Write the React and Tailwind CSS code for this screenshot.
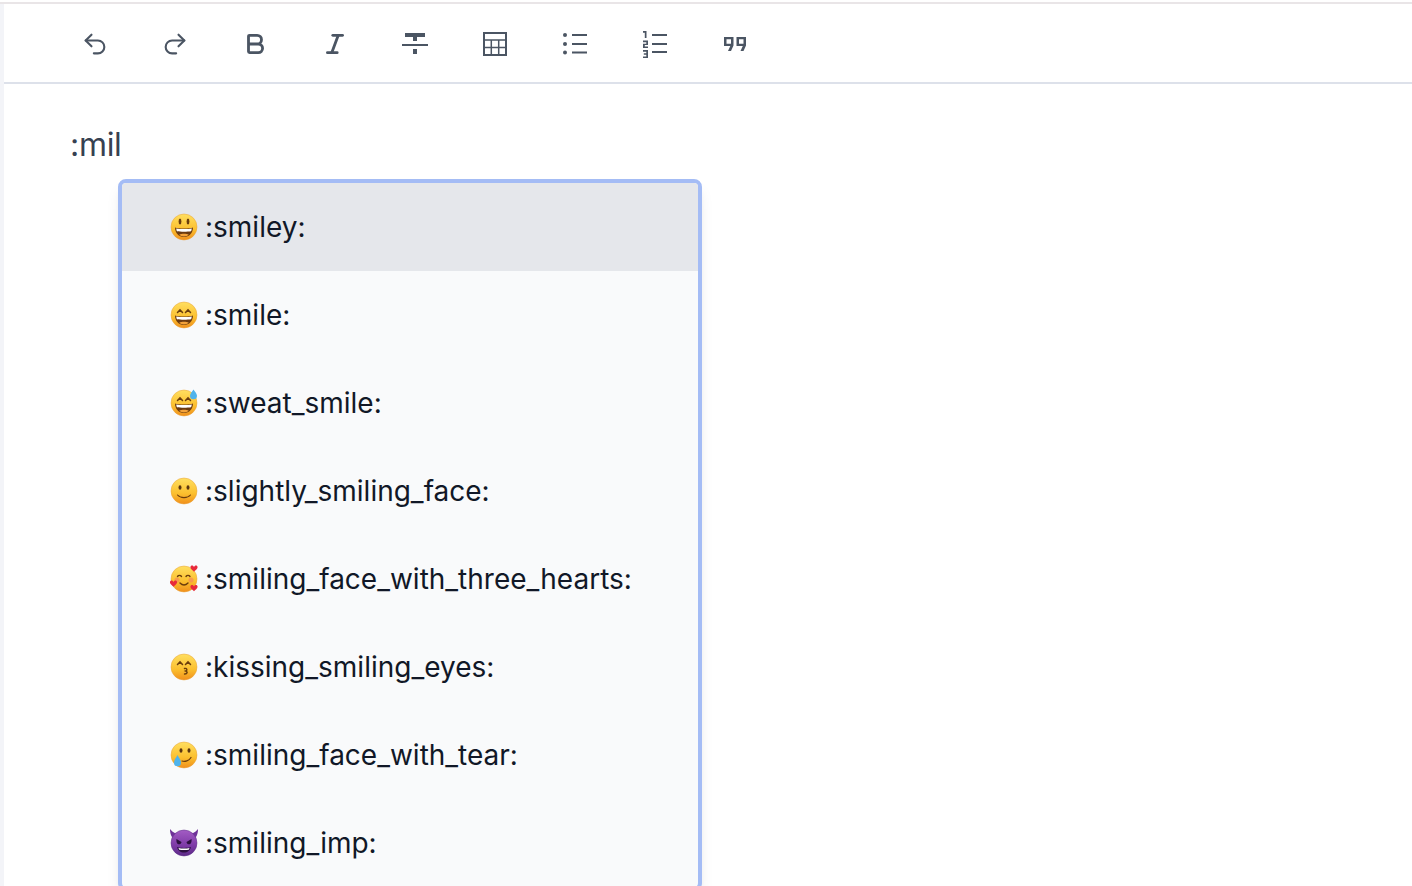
import React from "react";
import { Undo2, Redo2, Bold, Italic } from "lucide-react";

const rows = [
  { name: ":smiley:", emoji: "smiley", active: true },
  { name: ":smile:", emoji: "smile" },
  { name: ":sweat_smile:", emoji: "sweat" },
  { name: ":slightly_smiling_face:", emoji: "slight" },
  { name: ":smiling_face_with_three_hearts:", emoji: "hearts" },
  { name: ":kissing_smiling_eyes:", emoji: "kiss" },
  { name: ":smiling_face_with_tear:", emoji: "tear" },
  { name: ":smiling_imp:", emoji: "imp" },
];

const Heart = ({ x, y }) => (
  <path
    transform={`translate(${x} ${y})`}
    d="M0 1.6C-.5-.6-3.6-.5-3.6 1.8-3.6 3.500-1 5 0 6.200 1 5 3.6 3.500 3.6 1.8 3.6-.5.5-.6 0 1.6Z"
    fill="#e8293a"
  />
);

const HappyEyes = () => (
  <g fill="none" stroke="#6b3d0c" strokeWidth="1.5" strokeLinecap="round">
    <path d="M7.500 11.500l2.500-2.600 2.500 2.600" />
    <path d="M15.500 11.500l2.500-2.600 2.500 2.600" />
  </g>
);

const Grin = () => (
  <g>
    <path d="M5 14.500c3 1.300 15 1.300 18 0 0 5.500-3.800 9.500-9 9.500s-9-4-9-9.500Z" fill="#6b3a10" />
    <path d="M6.200 15.400c3.500 .8 12.100 .8 15.600 0-.2 1.500-.5 2.300-.8 2.900-3.500 .6-10.500 .6-14 0-.3-.6-.6-1.400-.8-2.900Z" fill="#fff" />
    <path d="M9.200 21.800c2.400-1.300 7.200-1.300 9.600 0-1.300 1.100-3 1.700-4.800 1.700s-3.500-.6-4.800-1.700Z" fill="#f3a23a" />
  </g>
);

function Emoji({ type }) {
  const id = `face-${type}`;
  const imp = type === "imp";
  return (
    <svg viewBox="0 0 28 28" className="w-7 h-7 shrink-0">
      <defs>
        <linearGradient id={id} x1="0" y1="0" x2="0" y2="1">
          <stop offset="0" stopColor={imp ? "#a35cc4" : "#ffdf60"} />
          <stop offset=".6" stopColor={imp ? "#7d3aa6" : "#fbbf2e"} />
          <stop offset="1" stopColor={imp ? "#5c2a86" : "#f08f1c"} />
        </linearGradient>
      </defs>
      {imp && <path d="M0 0c0 5 1.500 9 5 10.500l5-5C6.500 5 3 4 0 0ZM28 0c0 5-1.500 9-5 10.500l-5-5C21.500 5 25 4 28 0Z" fill="#6f3299" />}
      <circle cx="14" cy="14" r="13" fill={`url(#${id})`} stroke={imp ? "#5c2a86" : "#e8a33a"} strokeWidth=".5" />

      {type === "smiley" && (
        <g>
          <ellipse cx="10" cy="8.500" rx="1.400" ry="3" fill="#6b3d0c" />
          <ellipse cx="18" cy="8.500" rx="1.400" ry="3" fill="#6b3d0c" />
          <Grin />
        </g>
      )}
      {type === "smile" && (
        <g>
          <HappyEyes />
          <Grin />
        </g>
      )}
      {type === "sweat" && (
        <g>
          <HappyEyes />
          <Grin />
          <path d="M23.500 .5c1.200 2 3.500 4 3.500 6.300a3.500 3.500 0 0 1-7 0c0-2.300 2.300-4.300 3.500-6.300Z" fill="#4fb3ec" />
        </g>
      )}
      {type === "slight" && (
        <g>
          <ellipse cx="10" cy="10.500" rx="1.500" ry="2.300" fill="#5a3510" />
          <ellipse cx="18" cy="10.500" rx="1.500" ry="2.300" fill="#5a3510" />
          <path d="M7.500 18c3 3.500 10 3.500 13 0" fill="none" stroke="#6b3d0c" strokeWidth="1.100" strokeLinecap="round" />
        </g>
      )}
      {type === "hearts" && (
        <g>
          <g fill="none" stroke="#6b3d0c" strokeWidth="1.400" strokeLinecap="round">
            <path d="M7.500 11.500c1-1.500 3-1.500 4 0" />
            <path d="M16 11.500c1-1.500 3-1.500 4 0" />
            <path d="M10 18c2.500 2.500 5.500 2.500 8 0" />
          </g>
          <circle cx="7" cy="15" r="2.500" fill="#f58a5a" opacity=".7" />
          <circle cx="21" cy="15" r="2.500" fill="#f58a5a" opacity=".7" />
          <Heart x={24} y={0.500} />
          <Heart x={3.500} y={15.500} />
          <Heart x={24} y={20} />
        </g>
      )}
      {type === "kiss" && (
        <g>
          <HappyEyes />
          <path d="M14.500 15.500c2.500-.6 3.300 1.600 1.200 2.500 2.300.7 1.700 3.200-1.200 3" fill="none" stroke="#6b3d0c" strokeWidth="1.400" strokeLinecap="round" />
        </g>
      )}
      {type === "tear" && (
        <g>
          <ellipse cx="11" cy="9.500" rx="1.500" ry="2.300" fill="#5a3510" />
          <ellipse cx="19" cy="9.500" rx="1.500" ry="2.300" fill="#5a3510" />
          <path d="M12 20c3 1 7-.2 9-3.500" fill="none" stroke="#6b3d0c" strokeWidth="1.200" strokeLinecap="round" />
          <path d="M7.500 14c1 2.200 3.500 4.800 3.500 7.700a3.500 3.500 0 0 1-7 0c0-2.900 2.500-5.500 3.500-7.700Z" fill="#4fb3ec" />
        </g>
      )}
      {imp && (
        <g>
          <path d="M6.500 10l5 3c-.2 1.500-1.200 2.300-2.500 2.300-1.800 0-3-2.300-2.500-5.300ZM21.500 10l-5 3c.2 1.500 1.200 2.300 2.500 2.300 1.800 0 3-2.300 2.500-5.300Z" fill="#2c1040" />
          <path d="M7 18c3 1.200 11 1.200 14 0-.8 3.500-3.500 5.500-7 5.500S7.800 21.500 7 18Z" fill="#2c1040" />
          <path d="M8.500 19c3 .7 8 .7 11 0-.2.800-.5 1.300-.8 1.800-2.700.4-6.700.4-9.400 0-.3-.5-.6-1-.8-1.800Z" fill="#fff" />
        </g>
      )}
    </svg>
  );
}

const ToolIcon = ({ children }) => (
  <button className="w-20 h-[78px] pt-[2px] flex items-center justify-center text-[#4b5563]">{children}</button>
);

export default function App() {
  return (
    <div className="h-[886px] overflow-hidden bg-white font-['Inter',sans-serif]">
      <div className="h-[2px]" />
      <div className="h-[884px] border-t-2 border-[#e9e5e7] overflow-hidden">
        <div className="h-[882px] border-l-4 border-l-[#f3f4f8]">
          <div className="h-[78px] flex items-center pl-[51px] border-b-2 border-[#dde1ea] box-content">
            <ToolIcon><Undo2 size={28} strokeWidth={1.8} /></ToolIcon>
            <ToolIcon><Redo2 size={28} strokeWidth={1.8} /></ToolIcon>
            <ToolIcon><Bold size={26} strokeWidth={2.6} /></ToolIcon>
            <ToolIcon><Italic size={26} strokeWidth={2.6} /></ToolIcon>
            <ToolIcon>
              <svg viewBox="0 0 28 28" className="w-7 h-7" fill="currentColor">
                <path d="M4 3h20v4h-8v4h-4V7H4ZM1 14h26v2H1ZM12 19h4v5h-4Z" />
              </svg>
            </ToolIcon>
            <ToolIcon>
              <svg viewBox="0 0 24 24" className="w-6 h-6" fill="none" stroke="currentColor" strokeWidth="2">
                <path d="M1 1h22v22H1Z" />
                <path strokeWidth="1.500" d="M1 8h22M1 15.500h22M8.300 8v15M15.700 8v15" />
              </svg>
            </ToolIcon>
            <ToolIcon>
              <svg viewBox="0 0 26 24" className="w-[26px] h-6" fill="currentColor">
                <circle cx="3" cy="3" r="2" />
                <circle cx="3" cy="12" r="2" />
                <circle cx="3" cy="20.500" r="2" />
                <path d="M10 2h15v2H10ZM10 11h15v2H10ZM10 19.500h15v2H10Z" />
              </svg>
            </ToolIcon>
            <ToolIcon>
              <svg viewBox="0 0 26 28" className="w-[26px] h-7" fill="currentColor">
                <path d="M1 1h3.500v7H2.800V2.800H1ZM1 10.500h5v4.500H2.800v1.400H6V18H1v-4.300h3.300v-1.500H1ZM1 20h5v8H1v-1.600h3.300v-1.600H1.800v-1.500h2.500v-1.600H1Z" />
                <path d="M10 4h15v2H10ZM10 13h15v2H10ZM10 21h15v2H10Z" />
              </svg>
            </ToolIcon>
            <ToolIcon>
              <svg viewBox="0 0 24 16" className="w-6 h-4" fill="currentColor">
                <path d="M1 1h9.500v8.500L8 15H5l2.300-5H1ZM13.500 1H23v8.500L20.500 15h-3l2.300-5h-6.300ZM3.500 3.200v4.500h4.500V3.200ZM16 3.200v4.500h4.500V3.200Z" fillRule="evenodd" />
              </svg>
            </ToolIcon>
          </div>

          <div className="pl-[66px] pt-[41px]">
            <p className="text-[32px] leading-[40px] text-[#374151] tracking-[-0.3px]">:mil</p>
            <div className="mt-[14px] ml-[48px] w-[584px] rounded-lg border-4 border-[#a4bcf5] bg-[#f9fafb] shadow-lg overflow-hidden">
              {rows.map((row) => (
                <div
                  key={row.name}
                  className={`h-[88px] flex items-center gap-[7px] pl-[48px] text-[28px] text-[#111827] ${row.active ? "bg-[#e5e7eb]" : ""}`}
                >
                  <Emoji type={row.emoji} />
                  <span>{row.name}</span>
                </div>
              ))}
            </div>
          </div>
        </div>
      </div>
    </div>
  );
}
